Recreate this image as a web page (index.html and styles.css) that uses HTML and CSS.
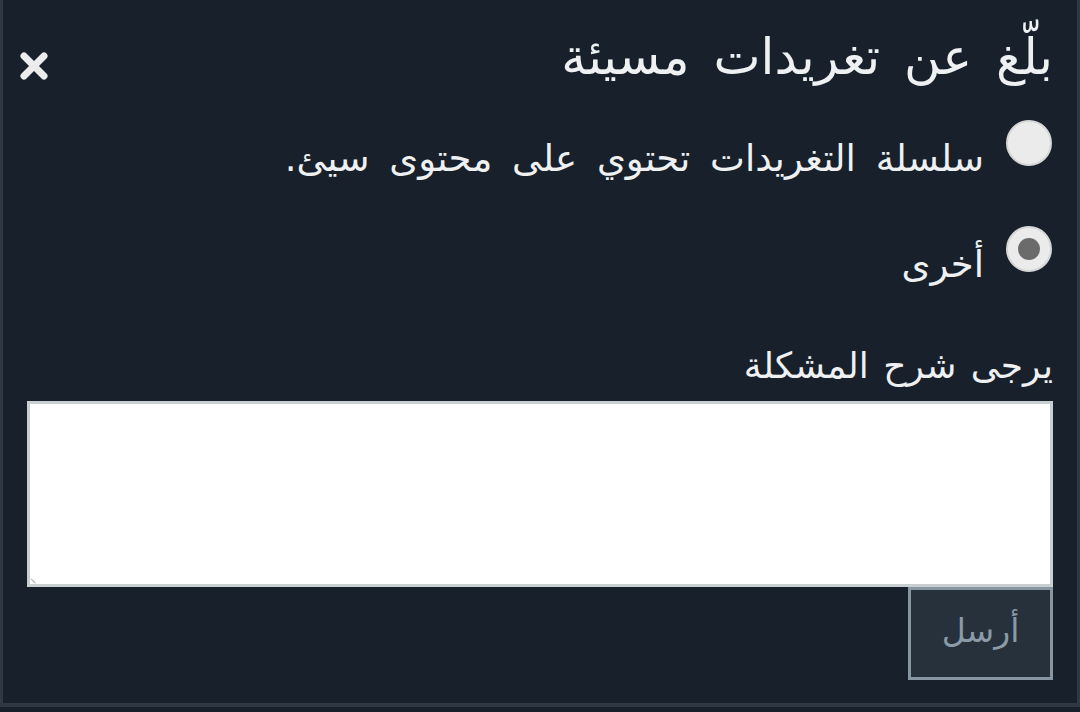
FILE: index.html
```html
<!DOCTYPE html>
<html lang="ar" dir="rtl">
<head>
<meta charset="utf-8">
<link rel="stylesheet" href="styles.css">
</head>
<body>
<div class="frame">
  <div class="dialog">
    <div class="header">
      <h1 class="title">بلّغ عن تغريدات مسيئة</h1>
      <button class="close" aria-label="إغلاق">
        <svg width="30" height="30" viewBox="0 0 30 30"><path d="M5 5 L25 25 M25 5 L5 25" stroke="#ececec" stroke-width="7" stroke-linecap="round"/></svg>
      </button>
    </div>
    <label class="option">
      <span class="radio"></span>
      <span class="option-text option-long">سلسلة التغريدات تحتوي على محتوى سيئ.</span>
    </label>
    <label class="option option-checked">
      <span class="radio checked"><span class="dot"></span></span>
      <span class="option-text">أخرى</span>
    </label>
    <div class="field-label">يرجى شرح المشكلة</div>
    <div class="textarea"><span class="grip"></span></div>
    <div class="actions">
      <button class="send">أرسل</button>
    </div>
  </div>
</div>
</body>
</html>
```
FILE: styles.css
```css
html, body {
  margin: 0;
  padding: 0;
  background: #17202b;
}
body {
  width: 1080px;
  height: 712px;
  overflow: hidden;
  font-family: "DejaVu Sans", "Noto Sans", sans-serif;
  color: #eef0f2;
}
.frame {
  box-sizing: border-box;
  width: 1080px;
  height: 707px;
  border-left: 3px solid #2e3943;
  border-right: 3px solid #2e3943;
  border-bottom: 4px solid #2e3943;
}
.dialog {
  padding: 0 24px 0 24px;
  display: flex;
  flex-direction: column;
}
.header {
  display: flex;
  justify-content: space-between;
  align-items: center;
  height: 120px;
}
.title {
  margin: 0;
  font-size: 50px;
  font-weight: normal;
  line-height: 1;
  word-spacing: 8px;
  margin-top: -6px;
}
.close {
  background: none;
  border: 0;
  padding: 0;
  margin-left: -8px;
  width: 30px;
  height: 30px;
  display: flex;
  margin-top: 12px;
}
.option {
  display: flex;
  align-items: center;
  gap: 22px;
  height: 50px;
  margin-top: -2px;
}
.option-checked {
  margin-top: 56px;
}
.radio {
  box-sizing: border-box;
  width: 46px;
  height: 46px;
  border-radius: 50%;
  background: #ebebeb;
  border: 2px solid #d6d6d6;
  display: flex;
  align-items: center;
  justify-content: center;
  flex-shrink: 0;
  margin-right: 1px;
}
.dot {
  width: 22px;
  height: 22px;
  border-radius: 50%;
  background: #6b6b6b;
}
.option-text {
  font-size: 37px;
  line-height: 1;
  padding-top: 30px;
}
.option-long {
  word-spacing: 8px;
}
.field-label {
  font-size: 36px;
  line-height: 1;
  word-spacing: 3px;
  margin-top: 74px;
}
.textarea {
  box-sizing: border-box;
  margin-top: 17px;
  height: 186px;
  background: #ffffff;
  border: 3px solid #c9ced3;
  position: relative;
}
.grip {
  position: absolute;
  left: 2px;
  bottom: 2px;
  width: 6px;
  height: 6px;
  border-left: 1px solid #9aa0a6;
  transform: rotate(-45deg);
}
.actions {
  display: flex;
  justify-content: flex-start;
}
.send {
  box-sizing: border-box;
  width: 145px;
  height: 93px;
  background: #26313c;
  border: 3px solid #8796a3;
  color: #8b9aa7;
  font-family: "DejaVu Sans", sans-serif;
  font-size: 33px;
  padding: 0 0 6px 0;
}
```
